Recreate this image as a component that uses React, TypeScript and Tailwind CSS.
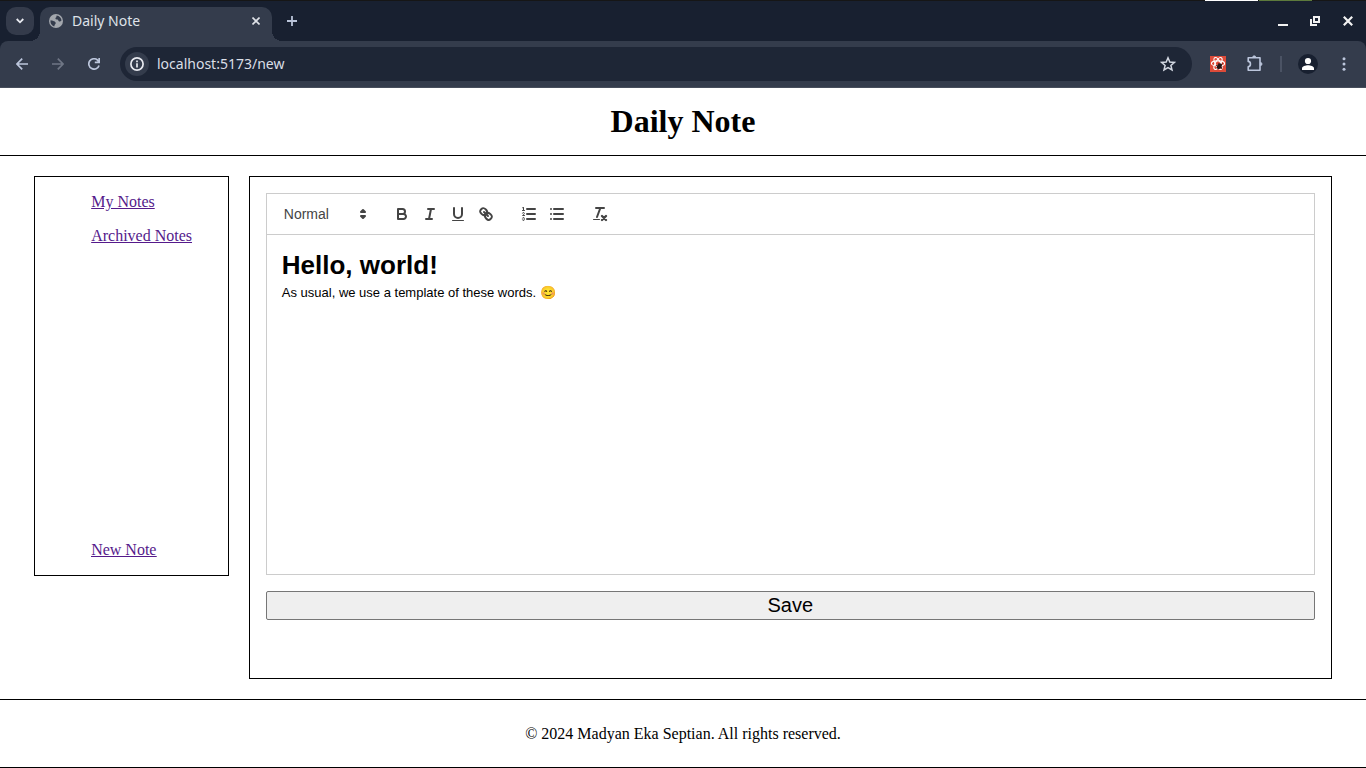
import React from "react";

const iconButton = "flex h-7 w-7 shrink-0 items-center justify-center rounded-full";

function TabStrip() {
  return (
    <div className="flex h-10 items-start bg-[#182030] pt-1.5 pl-1.5 pr-1">
      <button
        type="button"
        aria-label="Search tabs"
        className="flex h-7 w-7 shrink-0 items-center justify-center rounded-[10px] bg-[#343b4b]"
      >
        <svg width="8" height="6" viewBox="0 0 8 6" fill="none" stroke="#e8eaf0" strokeWidth="1.8">
          <path d="M0.7 1 4 4.3 7.3 1" />
        </svg>
      </button>
      <div className="relative ml-1.5 flex h-[34px] w-[232px] items-center rounded-t-[10px] bg-[#343c4c] px-2 pb-1.5">
        <span className="absolute bottom-0 -left-2.5 h-2.5 w-2.5 bg-[radial-gradient(circle_at_0_0,transparent_10px,#343c4c_10px)]" />
        <span className="absolute bottom-0 -right-2.5 h-2.5 w-2.5 bg-[radial-gradient(circle_at_100%_0,transparent_10px,#343c4c_10px)]" />
        <svg width="16" height="16" viewBox="0 0 16 16">
          <circle cx="8" cy="8" r="7" fill="#a3a7ad" />
          <path
            d="M2.6 7.2C4.2 7.8 5.8 7.8 6.8 8.6C7.8 9.4 8.2 10.6 7.2 11.2C6.4 11.8 6.6 13 6.2 13.4C3.6 12.6 2 10 2.6 7.2Z"
            fill="#343c4c"
          />
          <path
            d="M8.6 2.5C11.4 2.8 13.4 5 13.5 7.6C12.6 8.4 11.6 8.8 10.8 8.2C10.2 7.6 10.4 6.8 9.4 6.6C8.4 6.6 7.4 6.2 7.4 5.2C7.4 4.4 8.8 4.2 8.4 3.4Z"
            fill="#343c4c"
          />
        </svg>
        <span className="ml-2 flex-1 font-['Noto_Sans',sans-serif] text-sm leading-5 text-[#dfe2e8]">Daily Note</span>
        <button type="button" aria-label="Close tab" className="flex h-4 w-4 items-center justify-center">
          <svg width="8" height="8" viewBox="0 0 8 8" stroke="#dfe2e8" strokeWidth="1.6">
            <path d="M0.5 0.5l7 7M7.5 0.5l-7 7" />
          </svg>
        </button>
      </div>
      <button type="button" aria-label="New tab" className="ml-1.5 flex h-7 w-7 items-center justify-center">
        <svg width="10" height="10" viewBox="0 0 10 10" stroke="#b9c3d8" strokeWidth="1.8">
          <path d="M5 0v10M0 5h10" />
        </svg>
      </button>
      <div className="ml-auto flex gap-1">
        <button type="button" aria-label="Minimize" className={iconButton}>
          <svg width="10" height="10" viewBox="0 0 10 10" fill="#f2f2f2">
            <rect y="8" width="10" height="2" />
          </svg>
        </button>
        <button type="button" aria-label="Restore" className={iconButton}>
          <svg width="10" height="10" viewBox="0 0 10 10" fill="none" stroke="#f2f2f2" strokeWidth="2">
            <path d="M4 1h5v5H4z" />
            <path d="M1 3v6h6" />
          </svg>
        </button>
        <div className="pl-px">
          <button type="button" aria-label="Close window" className={iconButton}>
            <svg width="10" height="10" viewBox="0 0 10 10" stroke="#f2f2f2" strokeWidth="2.2">
              <path d="M0.8 0.8l8.4 8.4M9.2 0.8L0.8 9.2" />
            </svg>
          </button>
        </div>
      </div>
    </div>
  );
}

function AddressBar() {
  return (
    <div className="bg-[#182030]">
      <div className="flex h-[47px] items-center rounded-t-lg border-b border-[#474e5c] bg-[#343c4c] px-2">
        <div className="flex gap-2">
          <button type="button" aria-label="Back" className={iconButton}>
            <svg width="12" height="12" viewBox="0 0 12 12" fill="none" stroke="#bcc6dc" strokeWidth="1.7">
              <path d="M6.2 0.6 0.9 6 6.2 11.4M1 6H12" />
            </svg>
          </button>
          <button type="button" aria-label="Forward" disabled className={iconButton}>
            <svg width="12" height="12" viewBox="0 0 12 12" fill="none" stroke="#6f7685" strokeWidth="1.7">
              <path d="M5.8 0.6 11.1 6 5.8 11.4M11 6H0" />
            </svg>
          </button>
          <button type="button" aria-label="Reload" className={iconButton}>
            <svg width="12" height="12" viewBox="0 0 12 12" fill="none" stroke="#bcc6dc" strokeWidth="1.7">
              <path d="M11 7.4A5.2 5.2 0 1 1 9.8 2.4L11.2 4M11.2 0V4.4H6.8" />
            </svg>
          </button>
        </div>
        <div className="ml-3 flex h-[34px] flex-1 items-center rounded-full bg-[#1e2636] pl-[5px] pr-2.5">
          <button
            type="button"
            aria-label="View site information"
            className="flex h-6 w-6 items-center justify-center rounded-full bg-[#343c4c]"
          >
            <svg width="14" height="14" viewBox="0 0 14 14" fill="none" stroke="#e8eaf0" strokeWidth="1.7">
              <circle cx="7" cy="7" r="6.1" />
              <path d="M7 6.2V10.4M7 3.6V5.2" />
            </svg>
          </button>
          <input
            aria-label="Address"
            defaultValue="localhost:5173/new"
            className="ml-2 min-w-0 flex-1 bg-transparent font-['Noto_Sans',sans-serif] text-sm leading-5 text-[#dadee6] outline-none"
          />
          <button type="button" aria-label="Bookmark this tab" className={iconButton}>
            <svg width="16" height="16" viewBox="0 0 16 16" fill="none" stroke="#d3d8e2" strokeWidth="1.5">
              <path d="M8 1.8 9.8 6 14.4 6.4 10.9 9.4 12 13.9 8 11.5 4 13.9 5.1 9.4 1.6 6.4 6.2 6Z" />
            </svg>
          </button>
        </div>
        <div className="ml-3 flex items-center">
          <button type="button" aria-label="React developer tools" className={iconButton}>
            <svg width="16" height="16" viewBox="0 0 16 16">
              <rect width="16" height="16" fill="#dd4b39" />
              <g fill="none" stroke="#fff" strokeWidth="1.1">
                <ellipse cx="8" cy="7.5" rx="6.6" ry="2.6" />
                <ellipse cx="8" cy="7.5" rx="6.6" ry="2.6" transform="rotate(60 8 7.5)" />
                <ellipse cx="8" cy="7.5" rx="6.6" ry="2.6" transform="rotate(120 8 7.5)" />
              </g>
              <ellipse cx="9.4" cy="10.2" rx="2.1" ry="3" transform="rotate(35 9.4 10.2)" fill="#221414" />
              <path d="M6 9.4l6 2.6M7.4 12.5l5-5M8.4 7.4l3.4 5.4" stroke="#221414" strokeWidth="0.9" />
            </svg>
          </button>
          <button type="button" aria-label="Extensions" className="ml-2 flex h-7 w-[30px] items-center justify-center">
            <svg width="18" height="18" viewBox="0 0 18 18" fill="none" stroke="#bcc6dc" strokeWidth="1.6" strokeLinejoin="round">
              <path d="M2.2 2.8H14V15.2H2.2V11.8C5.2 11.4 5.2 6.8 2.2 6.4Z" />
              <path d="M6.6 2.4A1.6 1.6 0 0 1 9.8 2.4ZM14.4 7.4A1.6 1.6 0 0 1 14.4 10.6Z" fill="#bcc6dc" strokeWidth="0.8" />
            </svg>
          </button>
          <span className="ml-2.5 h-4 w-0.5 bg-[#4b5364]" />
          <button type="button" aria-label="Profile" className="ml-4 flex h-5 w-5 items-center justify-center rounded-full bg-[#182030]">
            <svg width="14" height="14" viewBox="0 0 14 14" fill="#fff">
              <circle cx="7" cy="4" r="3.1" />
              <path d="M1 13V11.2C1 9.2 4.6 8.2 7 8.2S13 9.2 13 11.2V13Z" />
            </svg>
          </button>
          <button type="button" aria-label="Menu" className="ml-3 flex h-7 w-7 items-center justify-center">
            <svg width="4" height="14" viewBox="0 0 4 14" fill="#bcc6dc">
              <circle cx="2" cy="1.7" r="1.5" />
              <circle cx="2" cy="7" r="1.5" />
              <circle cx="2" cy="12.3" r="1.5" />
            </svg>
          </button>
        </div>
      </div>
    </div>
  );
}

function ToolIcon({ label, children }: { label: string; children: React.ReactNode }) {
  return (
    <button type="button" aria-label={label} className="h-6 w-7 px-[5px] py-[3px]">
      <svg width="18" height="18" viewBox="0 0 18 18" fill="none" stroke="#444" strokeWidth="2" strokeLinecap="round" strokeLinejoin="round">
        {children}
      </svg>
    </button>
  );
}

function Editor() {
  return (
    <div className="border border-[#ccc] font-['Liberation_Sans',Arial,sans-serif]">
      <div role="toolbar" aria-label="Formatting" className="flex gap-[15px] border-b border-[#ccc] p-2">
        <div className="relative h-6 w-[98px] text-[#444]">
          <select
            aria-label="Text style"
            defaultValue="Normal"
            className="h-6 w-full appearance-none bg-transparent pl-[9px] text-sm font-medium outline-none"
          >
            <option>Heading 1</option>
            <option>Heading 2</option>
            <option>Normal</option>
          </select>
          <svg
            className="pointer-events-none absolute top-[3px] right-px"
            width="18"
            height="18"
            viewBox="0 0 18 18"
            fill="none"
            stroke="#444"
            strokeWidth="2"
            strokeLinecap="round"
            strokeLinejoin="round"
          >
            <polygon points="7 11 9 13 11 11 7 11" />
            <polygon points="7 7 9 5 11 7 7 7" />
          </svg>
        </div>
        <div className="flex">
          <ToolIcon label="Bold">
            <path d="M5,4H9.5A2.5,2.5,0,0,1,12,6.5v0A2.5,2.5,0,0,1,9.5,9H5V4Z" />
            <path d="M5,9h5.5A2.5,2.5,0,0,1,13,11.5v0A2.5,2.5,0,0,1,10.5,14H5V9Z" />
          </ToolIcon>
          <ToolIcon label="Italic">
            <path d="M7 4H13M5 14H11M8 14L10 4" />
          </ToolIcon>
          <ToolIcon label="Underline">
            <path d="M5,3V9a4.012,4.012,0,0,0,4,4H9a4.012,4.012,0,0,0,4-4V3" />
            <rect x="3" y="15" width="12" height="1" rx="0.5" fill="#444" stroke="none" />
          </ToolIcon>
          <ToolIcon label="Link">
            <path d="M7 7L11 11" />
            <path d="M8.9,4.577a3.476,3.476,0,0,1,.36,4.679A3.476,3.476,0,0,1,4.577,8.9C3.185,7.5,2.035,6.4,4.217,4.217S7.5,3.185,8.9,4.577Z" />
            <path d="M13.423,9.1a3.476,3.476,0,0,0-4.679-.36,3.476,3.476,0,0,0,.36,4.679c1.392,1.392,2.5,2.542,4.679.36S14.815,10.5,13.423,9.1Z" />
          </ToolIcon>
        </div>
        <div className="flex">
          <ToolIcon label="Numbered list">
            <path d="M7 4H15M7 9H15M7 14H15" />
            <path d="M2.5 5.5H4.5" strokeWidth="1" />
            <path
              d="M3.5,6A0.5,0.5,0,0,1,3,5.5V3.085l-0.276.138A0.5,0.5,0,0,1,2.053,3c-0.124-.247-0.023-0.324.224-0.447l1-.5A0.5,0.5,0,0,1,4,2.5v3A0.5,0.5,0,0,1,3.5,6Z"
              fill="#444"
              stroke="none"
            />
            <path d="M4.5,10.5h-2c0-.234,1.85-1.076,1.85-2.234A0.959,0.959,0,0,0,2.5,8.156" strokeWidth="1" />
            <path
              d="M2.5,14.846a0.959,0.959,0,0,0,1.85-.109A0.7,0.7,0,0,0,3.75,14a0.688,0.688,0,0,0,.6-0.736,0.959,0.959,0,0,0-1.85-.109"
              strokeWidth="1"
            />
          </ToolIcon>
          <ToolIcon label="Bulleted list">
            <path d="M6 4H15M6 9H15M6 14H15M3 4H3M3 9H3M3 14H3" />
          </ToolIcon>
        </div>
        <div className="flex">
          <ToolIcon label="Clear formatting">
            <path d="M5 3H13M6 12L9.35 3" />
            <path d="M11 11L15 15M15 11L11 15" strokeWidth="2.4" />
            <rect x="2" y="14" width="7" height="1" rx="0.5" fill="#444" stroke="none" />
          </ToolIcon>
        </div>
      </div>
      <div
        role="textbox"
        aria-label="Note"
        aria-multiline="true"
        contentEditable
        suppressContentEditableWarning
        className="min-h-[339px] px-[15px] py-3 text-[13px] leading-[18px] text-black outline-none"
      >
        <h2 className="text-[26px] leading-[37px] font-bold">Hello, world!</h2>
        <p>As usual, we use a template of these words. 😊</p>
      </div>
    </div>
  );
}

export default function App() {
  return (
    <div className="flex min-h-screen flex-col bg-white font-['Liberation_Serif','Times_New_Roman',serif] text-base leading-[18px] text-black">
      <div className="flex h-px justify-end bg-[#161616] pr-[54px]">
        <span className="w-[53px] bg-white" />
        <span className="ml-px w-[53px] bg-[#5d7a3c]" />
      </div>
      <TabStrip />
      <AddressBar />
      <header className="border-b border-black py-4 text-center">
        <h1 className="text-[32px] leading-[35px] font-bold">Daily Note</h1>
      </header>
      <div className="mx-auto my-5 flex w-[95%] items-start gap-5">
        <nav className="flex h-[400px] w-[15%] shrink-0 flex-col border border-black py-4 pl-14 whitespace-nowrap text-[#551a8b] underline">
          <ul className="flex flex-col gap-4">
            <li><a href="#notes">My Notes</a></li>
            <li><a href="#archived">Archived Notes</a></li>
          </ul>
          <a href="#new" className="mt-auto">New Note</a>
        </nav>
        <main className="min-w-0 flex-1 border border-black px-4 pt-4 pb-[58px]">
          <Editor />
          <button
            type="button"
            className="mt-4 block w-full rounded-xs border border-[#767676] bg-[#efefef] py-0.5 font-['Liberation_Sans',Arial,sans-serif] text-xl leading-[23px]"
          >
            Save
          </button>
        </main>
      </div>
      <footer className="border-y border-black py-[25px] text-center">
        <p className="leading-[17px]">© 2024 Madyan Eka Septian. All rights reserved.</p>
      </footer>
    </div>
  );
}
